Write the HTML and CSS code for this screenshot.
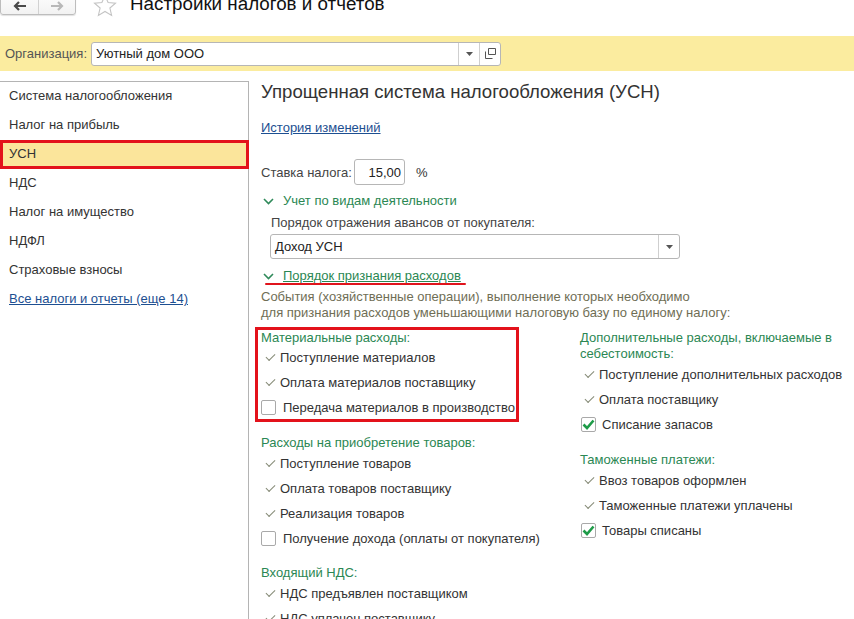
FILE: index.html
```html
<!DOCTYPE html>
<html lang="ru">
<head>
<meta charset="utf-8">
<title>Настройки налогов и отчетов</title>
<link rel="stylesheet" href="styles.css">
</head>
<body>
<div class="topbar">
  <div class="navgroup">
    <div class="navbtn">
      <svg width="14" height="10" viewBox="0 0 14 10"><path d="M13 5H3M6 1L2 5l4 4" fill="none" stroke="#4a4a4a" stroke-width="2.2"/></svg>
    </div>
    <div class="navbtn navsep">
      <svg width="14" height="10" viewBox="0 0 14 10"><path d="M1 5h10M8 1l4 4-4 4" fill="none" stroke="#b8b8b8" stroke-width="2.2"/></svg>
    </div>
  </div>
  <svg class="star" width="24" height="24" viewBox="0 0 24 24"><path d="M12 1.5l3.1 7 7.4.6-5.6 4.9 1.7 7.4L12 17.5l-6.6 3.9 1.7-7.4L1.5 9.1l7.4-.6z" fill="none" stroke="#c4c4c4" stroke-width="1.1"/></svg>
  <div class="pagetitle">Настройки налогов и отчетов</div>
</div>

<div class="orgbar">
  <span class="orglabel">Организация:</span>
  <div class="field orgfield">
    <span class="fieldtext">Уютный дом ООО</span>
    <span class="fbtn"><svg width="7" height="4" viewBox="0 0 7 4"><path d="M0 0h7L3.5 4z" fill="#555"/></svg></span>
    <span class="fbtn"><svg width="11" height="11" viewBox="0 0 11 11"><path d="M3.5 0.5h7v6h-7z M0.5 3.5v7h7" fill="none" stroke="#555" stroke-width="1"/></svg></span>
  </div>
</div>

<div class="main">
  <nav class="sidebar">
    <div class="navitem">Система налогообложения</div>
    <div class="navitem">Налог на прибыль</div>
    <div class="navitem selected">УСН</div>
    <div class="navitem">НДС</div>
    <div class="navitem">Налог на имущество</div>
    <div class="navitem">НДФЛ</div>
    <div class="navitem">Страховые взносы</div>
    <div class="navitem"><a class="link">Все налоги и отчеты (еще 14)</a></div>
  </nav>

  <section class="content">
    <h1 class="title">Упрощенная система налогообложения (УСН)</h1>
    <div class="historyrow"><a class="link">История изменений</a></div>

    <div class="raterow">
      <span class="ratelabel">Ставка налога:</span>
      <div class="field ratefield">15,00</div>
      <span class="pct">%</span>
    </div>

    <div class="grouphead">
      <svg class="chev" width="11" height="7" viewBox="0 0 11 7"><path d="M1 1l4.5 4.5L10 1" fill="none" stroke="#2f8a5a" stroke-width="1.6"/></svg>
      <span>Учет по видам деятельности</span>
    </div>
    <div class="sublabel">Порядок отражения авансов от покупателя:</div>
    <div class="field advfield">
      <span class="fieldtext">Доход УСН</span>
      <span class="fbtn"><svg width="7" height="4" viewBox="0 0 7 4"><path d="M0 0h7L3.5 4z" fill="#555"/></svg></span>
    </div>

    <div class="grouphead g2">
      <svg class="chev" width="11" height="7" viewBox="0 0 11 7"><path d="M1 1l4.5 4.5L10 1" fill="none" stroke="#2f8a5a" stroke-width="1.6"/></svg>
      <span class="uline">Порядок признания расходов</span>
      <span class="redline"></span>
    </div>
    <div class="desc">События (хозяйственные операции), выполнение которых необходимо<br>для признания расходов уменьшающими налоговую базу по единому налогу:</div>

    <div class="columns">
      <div class="colleft">
        <div class="redbox">
          <div class="sechead">Материальные расходы:</div>
          <div class="item"><span class="tick"></span>Поступление материалов</div>
          <div class="item"><span class="tick"></span>Оплата материалов поставщику</div>
          <div class="item"><span class="cb"></span>Передача материалов в производство</div>
        </div>

        <div class="sechead s2">Расходы на приобретение товаров:</div>
        <div class="item"><span class="tick"></span>Поступление товаров</div>
        <div class="item"><span class="tick"></span>Оплата товаров поставщику</div>
        <div class="item"><span class="tick"></span>Реализация товаров</div>
        <div class="item"><span class="cb"></span>Получение дохода (оплаты от покупателя)</div>

        <div class="sechead s3">Входящий НДС:</div>
        <div class="item"><span class="tick"></span>НДС предъявлен поставщиком</div>
        <div class="item"><span class="tick"></span>НДС уплачен поставщику</div>
      </div>

      <div class="colright">
        <div class="sechead two">Дополнительные расходы, включаемые в<br>себестоимость:</div>
        <div class="item"><span class="tick"></span>Поступление дополнительных расходов</div>
        <div class="item"><span class="tick"></span>Оплата поставщику</div>
        <div class="item"><span class="cb on"><svg width="13" height="11" viewBox="0 0 13 11"><path d="M1.5 5.5l3.5 3.5 6.5-7.5" fill="none" stroke="#1e9b48" stroke-width="2.6"/></svg></span>Списание запасов</div>

        <div class="sechead s4">Таможенные платежи:</div>
        <div class="item"><span class="tick"></span>Ввоз товаров оформлен</div>
        <div class="item"><span class="tick"></span>Таможенные платежи уплачены</div>
        <div class="item"><span class="cb on"><svg width="13" height="11" viewBox="0 0 13 11"><path d="M1.5 5.5l3.5 3.5 6.5-7.5" fill="none" stroke="#1e9b48" stroke-width="2.6"/></svg></span>Товары списаны</div>
      </div>
    </div>
  </section>
</div>
</body>
</html>
```

FILE: styles.css
```css
* { box-sizing: border-box; }
html, body { margin: 0; padding: 0; }
body {
  width: 854px;
  height: 619px;
  overflow: hidden;
  background: #fff;
  font-family: "Liberation Sans", Arial, sans-serif;
  font-size: 13px;
  color: #333;
}

.topbar {
  height: 36px;
  display: flex;
  align-items: flex-start;
}
.navgroup {
  display: flex;
  margin-top: -10px;
  height: 25px;
  border: 1px solid #bdbdbd;
  border-radius: 0 0 3px 3px;
  background: linear-gradient(#fff, #f2f2f2);
  box-shadow: 0 1px 1px rgba(0,0,0,0.12);
}
.navbtn {
  width: 37px;
  display: flex;
  align-items: center;
  justify-content: center;
  padding-top: 6px;
}
.navsep { border-left: 1px solid #d2d2d2; }
.star { margin: -6px 0 0 17px; }
.pagetitle {
  margin: -9px 0 0 13px;
  font-size: 18.8px;
  line-height: 26px;
  color: #111;
}

.orgbar {
  height: 35px;
  background: #fbec9f;
  display: flex;
  align-items: center;
  padding-left: 5px;
}
.orglabel { color: #555; width: 86px; }

.field {
  background: #fff;
  border: 1px solid #b6b6b6;
  border-radius: 3px;
  display: flex;
  align-items: center;
}
.fieldtext { flex: 1; padding-left: 4px; color: #222; }
.fbtn {
  width: 21px;
  align-self: stretch;
  border-left: 1px solid #cfcfcf;
  display: flex;
  align-items: center;
  justify-content: center;
}
.orgfield { width: 410px; height: 24px; }

.main {
  display: flex;
  margin-top: 10px;
}
.sidebar {
  width: 249px;
  height: 560px;
  border: 1px solid #b4b4b4;
  border-left: none;
  flex-shrink: 0;
}
.navitem {
  height: 29px;
  line-height: 28px;
  padding-left: 9px;
  color: #333;
}
.navitem.selected {
  background: #fbe59b;
  border: 3px solid #e3121b;
  margin: 0 -1px 0 0;
  line-height: 22px;
  padding-left: 6px;
}
.link {
  color: #1d4f91;
  text-decoration: underline;
  cursor: pointer;
}

.content {
  padding-left: 12px;
  flex: 1;
}
.title {
  margin: 0;
  font-weight: normal;
  font-size: 18.6px;
  height: 22px;
  line-height: 22px;
  color: #333;
}
.historyrow {
  margin-top: 17px;
  line-height: 16px;
}
.raterow {
  margin-top: 23px;
  display: flex;
  align-items: center;
  height: 26px;
}
.ratelabel { width: 93px; color: #444; }
.ratefield {
  width: 51px;
  height: 26px;
  justify-content: flex-end;
  padding-right: 3px;
  color: #222;
}
.pct { margin-left: 11px; }

.grouphead {
  margin-top: 8px;
  height: 16px;
  line-height: 16px;
  display: flex;
  align-items: center;
  color: #2b8753;
  position: relative;
}
.chev { margin: 0 9px 0 2px; }
.g2 { margin-top: 9px; }
.uline { text-decoration: underline; }
.redline {
  position: absolute;
  left: 4px;
  top: 15px;
  width: 201px;
  height: 2px;
  background: #e0141c;
  border-radius: 1px;
}
.sublabel {
  margin-top: 6px;
  padding-left: 10px;
  line-height: 16px;
  color: #444;
}
.advfield {
  margin: 3px 0 0 9px;
  width: 410px;
  height: 25px;
}

.desc {
  margin-top: 5px;
  line-height: 16px;
  color: #6f6e55;
}

.columns {
  display: flex;
  margin-top: 6px;
}
.colleft { width: 319px; }
.colright { width: 274px; }

.redbox {
  margin-left: -6px;
  width: 264px;
  height: 95px;
  border: 3px solid #e3121b;
  padding-left: 3px;
}
.sechead {
  color: #2b8753;
  line-height: 16px;
  height: 16px;
}
.redbox .sechead { height: 15px; line-height: 16px; }
.sechead.two { height: 32px; margin-top: 3px; }
.s2 { margin-top: 13px; }
.s3 { margin-top: 14px; }
.s4 { margin-top: 15px; }

.item {
  height: 25px;
  display: flex;
  align-items: center;
  color: #333;
}
.tick {
  width: 9px;
  height: 5px;
  margin: 0 5px 0 5px;
  border-left: 1.6px solid #858a76;
  border-bottom: 1.6px solid #858a76;
  transform: rotate(-45deg) translate(1px, -1px);
}
.cb {
  width: 15px;
  height: 15px;
  border: 1px solid #a9a9a9;
  border-radius: 2px;
  background: #fff;
  margin-right: 7px;
  display: flex;
  align-items: center;
  justify-content: center;
}
.colright .cb { margin-left: 1px; margin-right: 6px; }
```
